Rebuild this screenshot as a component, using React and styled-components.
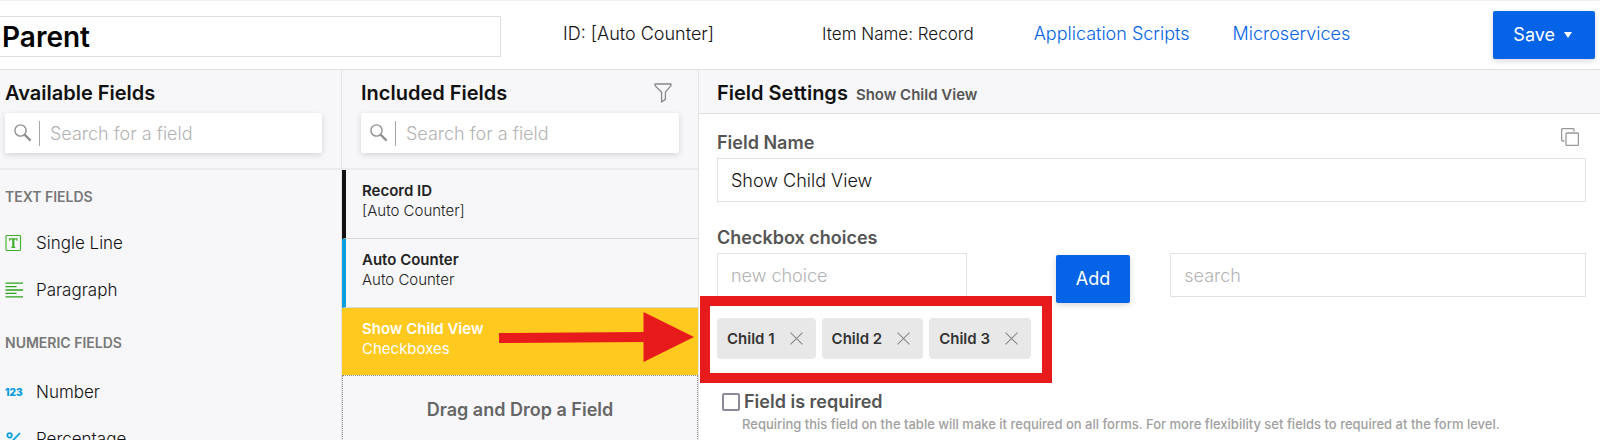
import * as React from 'react';
import styled, { createGlobalStyle } from 'styled-components';

const FIELD_GROUPS = [
  {
    name: 'Text Fields',
    fields: [
      { name: 'Single Line', Icon: SingleLineIcon },
      { name: 'Paragraph', Icon: ParagraphIcon },
    ],
  },
  {
    name: 'Numeric Fields',
    fields: [
      { name: 'Number', Icon: NumberIcon },
      { name: 'Percentage', Icon: PercentIcon },
    ],
  },
];

const INCLUDED_FIELDS = [
  { name: 'Record ID', type: '[Auto Counter]', color: '#111111' },
  { name: 'Auto Counter', type: 'Auto Counter', color: '#0b9fdd' },
  { name: 'Show Child View', type: 'Checkboxes', color: '#ffc920', selected: true },
];

export default function App() {
  const [choices, setChoices] = React.useState(['Child 1', 'Child 2', 'Child 3']);
  const [choice, setChoice] = React.useState('');

  function handleAdd() {
    if (choice) {
      setChoices([...choices, choice]);
      setChoice('');
    }
  }

  return (
    <>
      <GlobalStyle />
      <Page>
        <Header>
          <TitleInput aria-label="Table name" defaultValue="Parent" />
          <Meta>
            <span>ID: [Auto Counter]</span>
            <ItemName>Item Name: Record</ItemName>
            <Links>
              <a href="#scripts">Application Scripts</a>
              <a href="#microservices">Microservices</a>
            </Links>
          </Meta>
          <Button type="button">
            Save <Caret />
          </Button>
        </Header>

        <Columns>
          <Column>
            <ColumnHead>
              <HeadingRow>
                <Heading>Available Fields</Heading>
              </HeadingRow>
              <SearchField label="Search available fields" />
            </ColumnHead>
            {FIELD_GROUPS.map((group) => (
              <FieldGroup key={group.name}>
                <h3>{group.name}</h3>
                {group.fields.map(({ name, Icon }) => (
                  <AvailableField key={name}>
                    <Icon />
                    {name}
                  </AvailableField>
                ))}
              </FieldGroup>
            ))}
          </Column>

          <Column>
            <ColumnHead $inset>
              <HeadingRow>
                <Heading>Included Fields</Heading>
                <IconButton type="button" aria-label="Filter fields">
                  <FilterIcon />
                </IconButton>
              </HeadingRow>
              <SearchField label="Search included fields" />
            </ColumnHead>
            {INCLUDED_FIELDS.map((field) => (
              <IncludedField key={field.name} $color={field.color} $selected={field.selected}>
                <strong>{field.name}</strong>
                <span>{field.type}</span>
                {field.selected && <Arrow />}
              </IncludedField>
            ))}
            <DropZone>Drag and Drop a Field</DropZone>
          </Column>

          <Settings>
            <SettingsHead>
              <Heading>Field Settings</Heading>
              <small>Show Child View</small>
            </SettingsHead>
            <SettingsBody>
              <LabelRow>
                <Label htmlFor="field-name">Field Name</Label>
                <IconButton type="button" aria-label="Duplicate field">
                  <CopyIcon />
                </IconButton>
              </LabelRow>
              <TextInput id="field-name" defaultValue="Show Child View" />

              <ChoicesLabel>
                <Label htmlFor="new-choice">Checkbox choices</Label>
              </ChoicesLabel>
              <ChoicesRow>
                <TextInput
                  id="new-choice"
                  placeholder="new choice"
                  value={choice}
                  onChange={(e) => setChoice(e.target.value)}
                />
                <Button type="button" onClick={handleAdd}>
                  Add
                </Button>
                <TextInput aria-label="Search choices" placeholder="search" />
              </ChoicesRow>

              <Tags>
                {choices.map((name) => (
                  <Tag key={name}>
                    {name}
                    <button
                      type="button"
                      aria-label={`Remove ${name}`}
                      onClick={() => setChoices(choices.filter((c) => c !== name))}
                    >
                      <CloseIcon />
                    </button>
                  </Tag>
                ))}
                <Highlight />
              </Tags>

              <Required>
                <input type="checkbox" id="required" />
                <Label htmlFor="required">Field is required</Label>
              </Required>
              <Hint>
                Requiring this field on the table will make it required on all forms. For more flexibility set fields to
                required at the form level.
              </Hint>
            </SettingsBody>
          </Settings>
        </Columns>
      </Page>
    </>
  );
}

function SearchField(props) {
  return (
    <SearchBox>
      <SearchIcon />
      <input type="text" aria-label={props.label} placeholder="Search for a field" />
    </SearchBox>
  );
}

function SearchIcon() {
  return (
    <svg width="18" height="18" viewBox="0 0 18 18" fill="none" stroke="#8f8f8f">
      <circle cx="6.5" cy="6.5" r="5.6" strokeWidth="1.4" />
      <path d="M10.6 10.6 16.6 16.6" strokeWidth="2.2" />
    </svg>
  );
}

function FilterIcon() {
  return (
    <svg width="18" height="20" viewBox="0 0 18 20" fill="none" stroke="#888" strokeWidth="1.3" strokeLinejoin="round">
      <path d="M1 1h16v1.6l-5.6 6.6v7.2L7.6 19V9.2L1 2.6z" />
    </svg>
  );
}

function CopyIcon() {
  return (
    <svg width="18" height="18" viewBox="0 0 18 18" fill="none" stroke="#999" strokeWidth="1.3">
      <path d="M3.4 13H1.6a1 1 0 0 1-1-1V1.6a1 1 0 0 1 1-1H12a1 1 0 0 1 1 1v1.8" />
      <rect x="5" y="5" width="12.4" height="12.4" rx="1" />
    </svg>
  );
}

function CloseIcon() {
  return (
    <svg width="13" height="13" viewBox="0 0 12 12" stroke="#8a8a8a" strokeWidth="1">
      <path d="M.5.5l11 11M11.5.5l-11 11" />
    </svg>
  );
}

function SingleLineIcon() {
  return (
    <svg width="18" height="16" viewBox="0 0 18 16" fill="none" stroke="#3fae2a">
      <rect x="1" y=".5" width="14.5" height="15" rx="1" strokeWidth="1.1" />
      <path d="M4.6 5.8V3.8h7.4v2M6.3 12.4h4" strokeWidth="1.2" />
      <path d="M8.3 3.8v8.6" strokeWidth="2.2" />
    </svg>
  );
}

function ParagraphIcon() {
  return (
    <svg width="18" height="16" viewBox="0 0 18 16" stroke="#2da51c" strokeWidth="1.3">
      <path d="M.5 1.2H18M.5 4.6h11M.5 8H18M.5 11.4h11M.5 14.8H18" />
    </svg>
  );
}

function NumberIcon() {
  return <NumberGlyph aria-hidden="true">123</NumberGlyph>;
}

function PercentIcon() {
  return (
    <svg width="18" height="16" viewBox="0 0 18 16" fill="none" stroke="#0b9fdd" strokeWidth="1.8">
      <circle cx="4.6" cy="4.4" r="2.2" />
      <circle cx="13" cy="12" r="2.2" />
      <path d="M15 2 3 14.6" />
    </svg>
  );
}

function Arrow() {
  return (
    <ArrowSvg viewBox="0 0 195 50" fill="#e71b1b">
      <path d="M0 21 144.5 20V0L195 25 144.5 50V30L0 31z" />
    </ArrowSvg>
  );
}

const GlobalStyle = createGlobalStyle`
  * {
    box-sizing: border-box;
  }

  body {
    margin: 0;
    background: #fff;
    color: #111;
    font-family: Inter, 'Liberation Sans', sans-serif;
    font-size: 18px;
    line-height: 24px;
  }

  h2, h3 {
    margin: 0;
  }

  svg {
    display: block;
    flex-shrink: 0;
  }

  button, input {
    font: inherit;
  }

  input::placeholder {
    color: #b3b3b3;
    opacity: 1;
  }

  a {
    color: #0463e6;
    text-decoration: none;
  }
`;

const Page = styled.div`
  height: 100vh;
  overflow: hidden;
  display: flex;
  flex-direction: column;
`;

const Header = styled.header`
  height: 70px;
  padding: 0 5px 0 0;
  border-top: 1px solid #f0f0f0;
  border-bottom: 1px solid #dfdfe1;
  display: flex;
  align-items: center;
`;

const TitleInput = styled.input`
  width: 501px;
  height: 41px;
  margin-top: 3px;
  padding: 0 2px;
  border: 1px solid #dfdfdf;
  border-left: none;
  color: #000;
  font-size: 28px;
  font-weight: 600;
`;

const Meta = styled.div`
  flex: 1;
  margin: 0 143px 0 62px;
  padding-bottom: 2px;
  display: flex;
  align-items: baseline;
  font-weight: 300;
`;

const ItemName = styled.span`
  margin-left: 108px;
  font-size: 17px;
`;

const Links = styled.nav`
  margin-left: auto;
  display: flex;
  gap: 43px;
`;

const Button = styled.button`
  height: 48px;
  padding: 0 20px;
  border: none;
  border-radius: 2px;
  background: #0463e6;
  color: #fff;
  box-shadow: 0 2px 6px rgba(0, 0, 0, 0.16);
  display: flex;
  align-items: center;
  gap: 9px;
`;

const Caret = styled.span`
  margin-right: 3px;
  border: 4px solid transparent;
  border-top: 6px solid #fff;
  border-bottom: none;
`;

const Columns = styled.main`
  flex: 1;
  min-height: 0;
  display: grid;
  grid-template-columns: 342px 357px 1fr;
`;

const Column = styled.section`
  min-height: 0;
  overflow: hidden;
  background: #f7f7f9;
  border-right: 1px solid #e4e4e6;
`;

const ColumnHead = styled.div`
  padding: 11px 19px 15px ${(props) => (props.$inset ? 19 : 5)}px;
  border-bottom: 2px solid #ebebed;
`;

const HeadingRow = styled.div`
  margin-bottom: 8px;
  padding-right: 7px;
  display: flex;
  align-items: center;
  justify-content: space-between;
`;

const Heading = styled.h2`
  font-size: 20px;
  font-weight: 600;
`;

const IconButton = styled.button`
  padding: 0;
  border: none;
  background: transparent;
`;

const SearchBox = styled.div`
  height: 40px;
  padding: 0 9px;
  border-radius: 2px;
  background: #fff;
  box-shadow: 0 2px 6px rgba(0, 0, 0, 0.14);
  display: flex;
  align-items: center;
  gap: 7px;

  input {
    flex: 1;
    min-width: 0;
    height: 25px;
    padding: 0 0 0 10px;
    border: none;
    border-left: 1px solid #a5a5a5;
    outline: none;
    font-weight: 300;
  }
`;

const FieldGroup = styled.div`
  padding-top: 16px;

  h3 {
    padding: 0 5px;
    margin-bottom: 11px;
    color: #777;
    font-size: 14px;
    font-weight: 600;
    line-height: 22px;
    text-transform: uppercase;
  }

  & + & {
    padding-top: 19px;
  }

  & + & h3 {
    margin-bottom: 14px;
  }
`;

const AvailableField = styled.div`
  height: 47px;
  padding: 0 5px;
  display: flex;
  align-items: center;
  gap: 13px;
  font-size: 17px;
  font-weight: 300;
`;

const NumberGlyph = styled.span`
  width: 18px;
  color: #0b9fdd;
  font-size: 10px;
  font-weight: 900;
`;

const IncludedField = styled.div`
  position: relative;
  height: ${(props) => (props.$selected ? 67 : 69)}px;
  padding: 11px 16px;
  border-left: 4px solid ${(props) => props.$color};
  border-bottom: ${(props) => (props.$selected ? 'none' : '1px solid #d9d9db')};
  background: ${(props) => (props.$selected ? props.$color : 'transparent')};
  color: ${(props) => (props.$selected ? '#fff' : '#222')};
  display: flex;
  flex-direction: column;
  font-size: 15px;
  line-height: 20px;

  strong {
    font-weight: 600;
  }

  span {
    font-weight: ${(props) => (props.$selected ? 400 : 300)};
  }
`;

const ArrowSvg = styled.svg`
  position: absolute;
  top: 4px;
  right: 4px;
  width: 195px;
  height: 50px;
`;

const DropZone = styled.div`
  height: 70px;
  border: 1px dotted #8a8a8a;
  color: #666;
  display: flex;
  align-items: center;
  justify-content: center;
  font-weight: 600;
`;

const Settings = styled.section`
  min-width: 0;
  background: #fff;
`;

const SettingsHead = styled.div`
  height: 44px;
  padding: 11px 18px 0;
  border-bottom: 1px solid #dfdfe1;
  background: #f7f7f9;
  display: flex;
  align-items: baseline;
  gap: 8px;

  small {
    color: #555;
    font-size: 15px;
    font-weight: 600;
  }
`;

const SettingsBody = styled.div`
  padding: 14px 14px 0 18px;
`;

const LabelRow = styled.div`
  padding-right: 7px;
  display: flex;
  align-items: flex-start;
  justify-content: space-between;
`;

const Label = styled.label`
  color: #555;
  font-weight: 600;
  line-height: 30px;
`;

const TextInput = styled.input`
  display: block;
  width: 100%;
  height: 44px;
  padding: 0 13px;
  border: 1px solid #e2e2e2;
  color: #111;
  font-weight: 300;
`;

const ChoicesLabel = styled.div`
  padding-top: 21px;
`;

const ChoicesRow = styled.div`
  display: grid;
  grid-template-columns: minmax(0, 250fr) minmax(0, 89fr) auto minmax(0, 40fr) minmax(0, 416fr);
  align-items: start;

  ${Button} {
    grid-column: 3;
    margin-top: 2px;
  }

  input:last-child {
    grid-column: 5;
  }
`;

const Tags = styled.div`
  position: relative;
  width: fit-content;
  margin-top: 15px;
  display: flex;
  gap: 6px;
`;

const Tag = styled.div`
  height: 41px;
  padding: 0 13px 0 10px;
  border-radius: 4px;
  background: #e8e8e8;
  color: #333;
  display: flex;
  align-items: center;
  gap: 15px;
  font-size: 15px;
  font-weight: 600;

  button {
    padding: 0;
    border: none;
    background: transparent;
  }
`;

const Highlight = styled.div`
  position: absolute;
  inset: -22px -21px -24px -17px;
  border: 10px solid #e71b1b;
  pointer-events: none;
`;

const Required = styled.div`
  margin-top: 28px;
  padding-left: 5px;
  display: flex;
  align-items: center;
  gap: 4px;

  input {
    appearance: none;
    width: 18px;
    height: 18px;
    margin: 0;
    border: 2px solid #8b899b;
    border-radius: 2px;
    background: #fff;
  }

  input:checked {
    background: #0463e6;
  }
`;

const Hint = styled.p`
  margin: 0;
  padding-left: 25px;
  color: #a0a0a0;
  font-size: 13px;
  font-weight: 500;
  line-height: 14px;
`;
